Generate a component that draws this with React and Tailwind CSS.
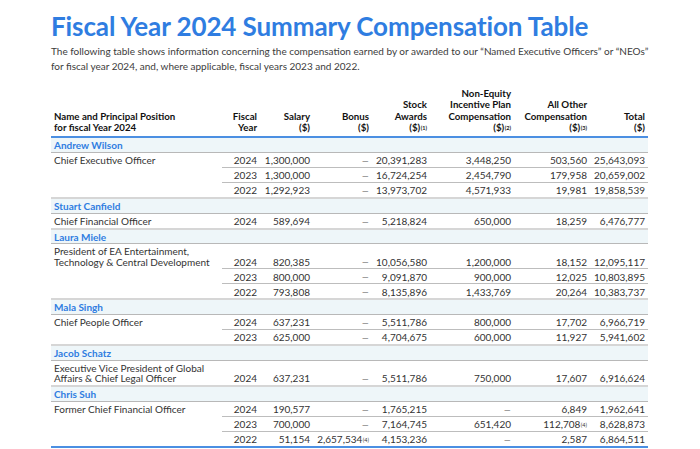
const groups = [
  {
    name: "Andrew Wilson",
    role: ["Chief Executive Officer"],
    rows: [
      ["2024", "1,300,000", "–", "20,391,283", "3,448,250", "503,560", "25,643,093"],
      ["2023", "1,300,000", "–", "16,724,254", "2,454,790", "179,958", "20,659,002"],
      ["2022", "1,292,923", "–", "13,973,702", "4,571,933", "19,981", "19,858,539"],
    ],
  },
  {
    name: "Stuart Canfield",
    role: ["Chief Financial Officer"],
    rows: [["2024", "589,694", "–", "5,218,824", "650,000", "18,259", "6,476,777"]],
  },
  {
    name: "Laura Miele",
    role: ["President of EA Entertainment,", "Technology & Central Development"],
    rows: [
      ["2024", "820,385", "–", "10,056,580", "1,200,000", "18,152", "12,095,117"],
      ["2023", "800,000", "–", "9,091,870", "900,000", "12,025", "10,803,895"],
      ["2022", "793,808", "–", "8,135,896", "1,433,769", "20,264", "10,383,737"],
    ],
  },
  {
    name: "Mala Singh",
    role: ["Chief People Officer"],
    rows: [
      ["2024", "637,231", "–", "5,511,786", "800,000", "17,702", "6,966,719"],
      ["2023", "625,000", "–", "4,704,675", "600,000", "11,927", "5,941,602"],
    ],
  },
  {
    name: "Jacob Schatz",
    role: ["Executive Vice President of Global", "Affairs & Chief Legal Officer"],
    rows: [["2024", "637,231", "–", "5,511,786", "750,000", "17,607", "6,916,624"]],
  },
  {
    name: "Chris Suh",
    role: ["Former Chief Financial Officer"],
    rows: [
      ["2024", "190,577", "–", "1,765,215", "–", "6,849", "1,962,641"],
      ["2023", "700,000", "–", "7,164,745", "651,420", "112,708|4", "8,628,873"],
      ["2022", "51,154", "2,657,534|4", "4,153,236", "–", "2,587", "6,864,511"],
    ],
  },
];

function Sup({ n }) {
  return <sup className="text-[5.5px] relative -top-[1px] ml-[0.5px]">({n})</sup>;
}

function Val({ v }) {
  if (v === "–")
    return <span className="text-[#888] font-['Liberation_Sans',sans-serif] leading-none pr-[1px]">–</span>;
  const [num, note] = v.split("|");
  return (
    <>
      {num}
      {note && <Sup n={note} />}
    </>
  );
}

export default function App() {
  return (
    <div className="w-[700px] h-[449px] bg-white pl-[51px] pt-[12px] font-['Lato',sans-serif] overflow-hidden">
      <h1 className="text-[26px] leading-[28px] font-bold text-[#2f7de1] tracking-[-0.1px] whitespace-nowrap">
        Fiscal Year 2024 Summary Compensation Table
      </h1>
      <p className="mt-[4px] text-[10px] leading-[15px] text-[#3c3c3c] whitespace-nowrap">
        The following table shows information concerning the compensation earned by or awarded to our “Named Executive Officers” or “NEOs”
        <br />
        for fiscal year 2024, and, where applicable, fiscal years 2023 and 2022.
      </p>
      <table className="mt-[14px] w-[597px] border-collapse table-fixed text-[10px] leading-[10.7px] text-[#333]">
        <colgroup>
          <col className="w-[171px]" />
          <col className="w-[38px]" />
          <col className="w-[53px]" />
          <col className="w-[59px]" />
          <col className="w-[58px]" />
          <col className="w-[84px]" />
          <col className="w-[76px]" />
          <col className="w-[58px]" />
        </colgroup>
        <thead>
          <tr className="border-b-2 border-[#4b8fe2] font-bold text-[#111] leading-[11.3px] text-[9.7px]">
            <th className="text-left align-bottom pl-[3px] pb-[3px] font-bold">
              Name and Principal Position
              <br />
              for fiscal Year 2024
            </th>
            <th className="text-right align-bottom pr-[3px] pb-[3px]">
              Fiscal
              <br />
              Year
            </th>
            <th className="text-right align-bottom pr-[3px] pb-[3px]">
              Salary
              <br />
              ($)
            </th>
            <th className="text-right align-bottom pr-[3px] pb-[3px]">
              Bonus
              <br />
              ($)
            </th>
            <th className="text-right align-bottom pr-[3px] pb-[3px]">
              Stock
              <br />
              Awards
              <br />
              ($)<Sup n="1" />
            </th>
            <th className="text-right align-bottom pr-[3px] pb-[3px]">
              Non-Equity
              <br />
              Incentive Plan
              <br />
              Compensation
              <br />
              ($)<Sup n="2" />
            </th>
            <th className="text-right align-bottom pr-[3px] pb-[3px]">
              All Other
              <br />
              Compensation
              <br />
              ($)<Sup n="3" />
            </th>
            <th className="text-right align-bottom pr-[3px] pb-[3px]">
              Total
              <br />
              ($)
            </th>
          </tr>
        </thead>
        <tbody>
          {groups.map((g, gi) => {
            const lastGroup = gi === groups.length - 1;
            const endBorder = lastGroup ? "border-b-2 border-[#4b8fe2]" : "border-b-2 border-[#d6d6d6]";
            return [
              <tr key={g.name} className="bg-[#eef6f9] border-b border-[#b8b8b8]">
                <td colSpan={8} className="pl-[3px] pt-[2px] pb-[1px] font-bold text-[#2f7de1]">
                  {g.name}
                </td>
              </tr>,
              ...g.rows.map((r, ri) => {
                const last = ri === g.rows.length - 1;
                const cellBorder = last ? endBorder : "border-b border-[#bdbdbd]";
                return (
                  <tr key={g.name + r[0]}>
                    <td className={`align-top pl-[3px] pt-[2px] pb-[1px] ${last ? endBorder : ""}`}>
                      {ri === 0 &&
                        g.role.map((l, li) => (
                          <div key={li}>{l}</div>
                        ))}
                    </td>
                    {r.map((v, vi) => (
                      <td key={vi} className={`text-right align-bottom pr-[3px] pt-[2px] pb-[1px] whitespace-nowrap ${cellBorder}`}>
                        <Val v={v} />
                      </td>
                    ))}
                  </tr>
                );
              }),
            ];
          })}
        </tbody>
      </table>
    </div>
  );
}
